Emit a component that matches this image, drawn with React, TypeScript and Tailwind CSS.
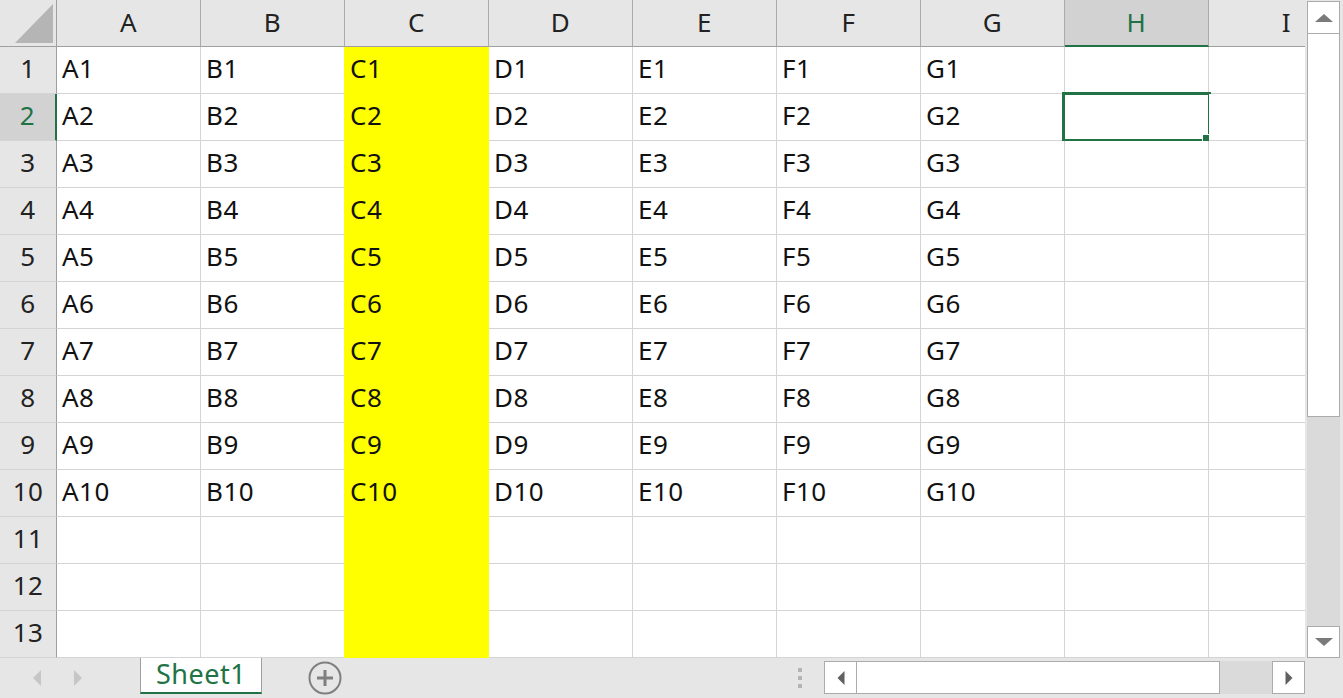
const COLS = ["A", "B", "C", "D", "E", "F", "G", "H", "I"];
const ROWS = Array.from({ length: 13 }, (_, i) => i + 1);

function cellText(col: string, row: number) {
  if (row > 10 || col === "H" || col === "I") return "";
  return `${col}${row}`;
}

function ArrowIcon({ dir, className }: { dir: "up" | "down" | "left" | "right"; className: string }) {
  const pts = {
    up: "0,8 9,0 18,8",
    down: "0,0 18,0 9,8",
    left: "8,0 8,16 0,8",
    right: "0,0 8,8 0,16",
  }[dir];
  const vb = dir === "up" || dir === "down" ? "0 0 18 8" : "0 0 8 16";
  return (
    <svg viewBox={vb} className={className}>
      <polygon points={pts} fill="currentColor" />
    </svg>
  );
}

function CornerCell() {
  return (
    <div className="bg-[#e6e6e6] border-r border-b border-[#9f9f9f] relative">
      <svg viewBox="0 0 56 46" className="w-full h-full">
        <polygon points="15,43 53,43 53,4" fill="#b5b5b5" />
      </svg>
    </div>
  );
}

function ColumnHeader({ col }: { col: string }) {
  const selected = col === "H";
  return (
    <div
      className={`flex items-center justify-center pb-[2px] border-r border-b ${
        selected
          ? "bg-[#d2d2d2] text-[#217346] border-r-[#ababab] border-b-2 border-b-[#217346]"
          : "bg-[#e6e6e6] text-[#222] border-r-[#ababab] border-b-[#9f9f9f]"
      } ${col === "I" ? "border-r-0 justify-end pr-[14px]" : ""}`}
    >
      {col}
    </div>
  );
}

function RowHeader({ row }: { row: number }) {
  const selected = row === 2;
  return (
    <div
      className={`flex items-center justify-center pb-[4px] border-b border-b-[#d4d4d4] ${
        selected
          ? "bg-[#d2d2d2] text-[#217346] border-r-2 border-r-[#217346]"
          : "bg-[#e6e6e6] text-[#222] border-r border-r-[#9f9f9f]"
      }`}
    >
      {row}
    </div>
  );
}

function Cell({ col, row }: { col: string; row: number }) {
  const yellow = col === "C";
  const nextYellow = col === "B";
  const last = col === "I";
  return (
    <div
      className={`relative flex items-center pl-[5px] pb-[4px] border-b border-r ${
        yellow ? "bg-[#ffff00] border-[#ffff00]" : "bg-white border-b-[#d4d4d4]"
      } ${nextYellow ? "border-r-[#ffff00]" : !yellow ? "border-r-[#d4d4d4]" : ""} ${
        last ? "border-r-0" : ""
      }`}
    >
      {cellText(col, row)}
      {col === "H" && row === 2 && (
        <div className="absolute -left-[3px] -top-[2px] -right-[3px] -bottom-[2px] border-[3px] border-[#217346]">
          <div className="absolute -right-[4px] -bottom-[5px] w-[10px] h-[10px] bg-[#217346] border border-white" />
        </div>
      )}
    </div>
  );
}

function VerticalScrollbar() {
  return (
    <div className="w-[38px] h-full bg-[#e6e6e6] flex flex-col pl-[2px] pr-[3px] pt-[1px]">
      <div className="h-[33px] bg-white border border-[#ababab] flex items-center justify-center text-[#7a7a7a]">
        <ArrowIcon dir="up" className="w-[18px] h-[8px]" />
      </div>
      <div className="flex-1 flex flex-col bg-[#dadada]">
        <div className="h-[383px] bg-white border border-[#ababab] border-t-0" />
      </div>
      <div className="h-[32px] bg-white border border-[#ababab] flex items-center justify-center text-[#7a7a7a]">
        <ArrowIcon dir="down" className="w-[18px] h-[8px]" />
      </div>
    </div>
  );
}

function BottomBar() {
  return (
    <div className="h-[40px] bg-[#e6e6e6] flex items-start text-[#217346]">
      <div className="w-[140px] h-full flex items-center pl-[33px] gap-[33px] text-[#c6c6c6]">
        <ArrowIcon dir="left" className="w-[8px] h-[16px]" />
        <ArrowIcon dir="right" className="w-[8px] h-[16px]" />
      </div>
      <div className="w-[122px] h-[36px] pb-[3px] text-[27px] bg-white border-x border-[#9f9f9f] border-b-2 border-b-[#217346] flex items-center justify-center">
        Sheet1
      </div>
      <div className="ml-[46px] h-full flex items-center">
        <svg viewBox="0 0 34 34" className="w-[34px] h-[34px]">
          <circle cx="17" cy="17" r="15.5" fill="none" stroke="#7f7f7f" strokeWidth="2" />
          <rect x="9" y="15.5" width="16" height="3" fill="#7f7f7f" />
          <rect x="15.5" y="9" width="3" height="16" fill="#7f7f7f" />
        </svg>
      </div>
      <div className="ml-[456px] h-full flex flex-col justify-center gap-[4px]">
        <span className="w-[4px] h-[4px] bg-[#b4b4b4]" />
        <span className="w-[4px] h-[4px] bg-[#b4b4b4]" />
        <span className="w-[4px] h-[4px] bg-[#b4b4b4]" />
      </div>
      <div className="ml-[22px] mt-[3px] h-[33px] w-[481px] flex">
        <div className="w-[33px] bg-white border border-[#ababab] flex items-center justify-center text-[#606060]">
          <ArrowIcon dir="left" className="w-[8px] h-[14px]" />
        </div>
        <div className="w-[363px] bg-white border border-[#ababab] border-l-0" />
        <div className="flex-1 bg-[#dadada]" />
        <div className="w-[33px] bg-white border border-[#ababab] flex items-center justify-center text-[#606060]">
          <ArrowIcon dir="right" className="w-[8px] h-[14px]" />
        </div>
      </div>
    </div>
  );
}

export default function App() {
  return (
    <div className="w-[1343px] h-[698px] overflow-hidden bg-[#e6e6e6] font-['Noto_Sans','Noto_Sans_CJK_JP',sans-serif] text-[26px] tracking-[0.5px] text-[#111] leading-none">
      <div className="h-[658px] flex">
        <div className="w-[1305px] h-full grid grid-cols-[57px_repeat(8,144px)_96px] grid-rows-[repeat(14,47px)] border-r border-r-[#9f9f9f] bg-white">
          <CornerCell />
          {COLS.map((c) => (
            <ColumnHeader key={c} col={c} />
          ))}
          {ROWS.map((r) => (
            <div key={r} className="contents">
              <RowHeader row={r} />
              {COLS.map((c) => (
                <Cell key={c} col={c} row={r} />
              ))}
            </div>
          ))}
        </div>
        <VerticalScrollbar />
      </div>
      <BottomBar />
    </div>
  );
}
